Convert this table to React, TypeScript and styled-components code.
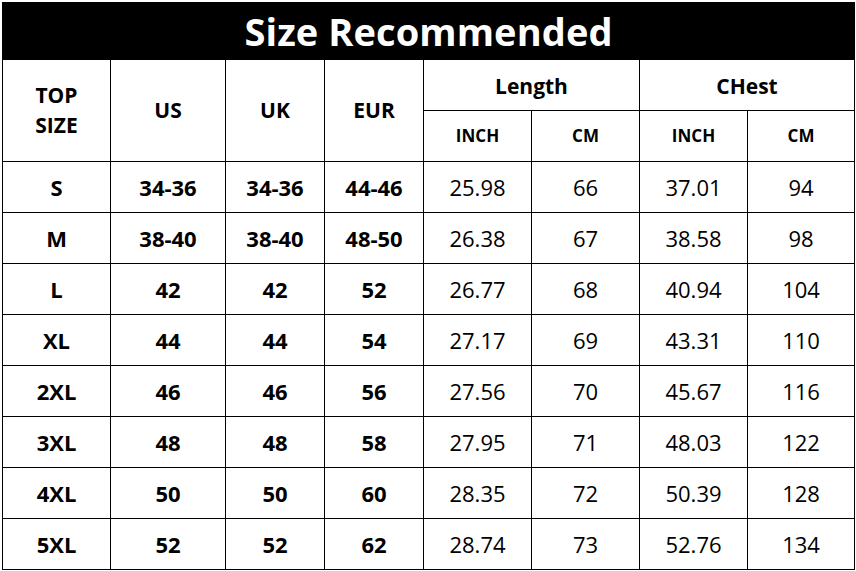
import React from "react";
import styled, { createGlobalStyle } from "styled-components";

const Global = createGlobalStyle`
  html, body { margin: 0; padding: 0; background: #fff; }
  body { font-family: "Open Sans", "Noto Sans", sans-serif; color: #000; }
`;

const Page = styled.div`
  padding: 2px 0 0 2px;
`;

const Grid = styled.div`
  display: grid;
  grid-template-columns: 107px 114px 98px 98px 107px 107px 107px 106px;
  grid-template-rows: 56px repeat(10, 50px);
  gap: 1px;
  padding: 1px;
  width: max-content;
  background: #000;
`;

const Title = styled.div`
  grid-column: 1 / -1;
  background: #000;
  color: #fff;
  font-weight: 700;
  font-size: 38px;
  display: flex;
  align-items: center;
  justify-content: center;
  letter-spacing: 0.1px;
`;

const Cell = styled.div<{ $bold?: boolean; $size?: number; $span?: string; $rowSpan?: number; $shift?: number }>`
  background: #fff;
  display: flex;
  align-items: center;
  justify-content: center;
  text-align: center;
  font-weight: ${(p) => (p.$bold ? 700 : 400)};
  font-size: ${(p) => p.$size ?? 22}px;
  line-height: 1.4;
  padding-top: ${(p) => p.$shift ?? 0}px;
  ${(p) => (p.$span ? `grid-column: ${p.$span};` : "")}
  ${(p) => (p.$rowSpan ? `grid-row: span ${p.$rowSpan};` : "")}
`;

const rows: [string, string, string, string, string, string, string, string][] = [
  ["S", "34-36", "34-36", "44-46", "25.98", "66", "37.01", "94"],
  ["M", "38-40", "38-40", "48-50", "26.38", "67", "38.58", "98"],
  ["L", "42", "42", "52", "26.77", "68", "40.94", "104"],
  ["XL", "44", "44", "54", "27.17", "69", "43.31", "110"],
  ["2XL", "46", "46", "56", "27.56", "70", "45.67", "116"],
  ["3XL", "48", "48", "58", "27.95", "71", "48.03", "122"],
  ["4XL", "50", "50", "60", "28.35", "72", "50.39", "128"],
  ["5XL", "52", "52", "62", "28.74", "73", "52.76", "134"],
];

export default function App() {
  return (
    <Page>
      <Global />
      <Grid>
        <Title>Size Recommended</Title>
        <Cell $bold $rowSpan={2} $size={21}>
          TOP
          <br />
          SIZE
        </Cell>
        <Cell $bold $rowSpan={2} $size={21}>US</Cell>
        <Cell $bold $rowSpan={2} $size={21}>UK</Cell>
        <Cell $bold $rowSpan={2} $size={21}>EUR</Cell>
        <Cell $bold $span="span 2" $size={21} $shift={3}>Length</Cell>
        <Cell $bold $span="span 2" $size={21} $shift={3}>CHest</Cell>
        <Cell $bold $size={17}>INCH</Cell>
        <Cell $bold $size={17}>CM</Cell>
        <Cell $bold $size={17}>INCH</Cell>
        <Cell $bold $size={17}>CM</Cell>
        {rows.map((r) =>
          r.map((v, i) => (
            <Cell key={r[0] + i} $bold={i < 4}>
              {v}
            </Cell>
          ))
        )}
      </Grid>
    </Page>
  );
}
